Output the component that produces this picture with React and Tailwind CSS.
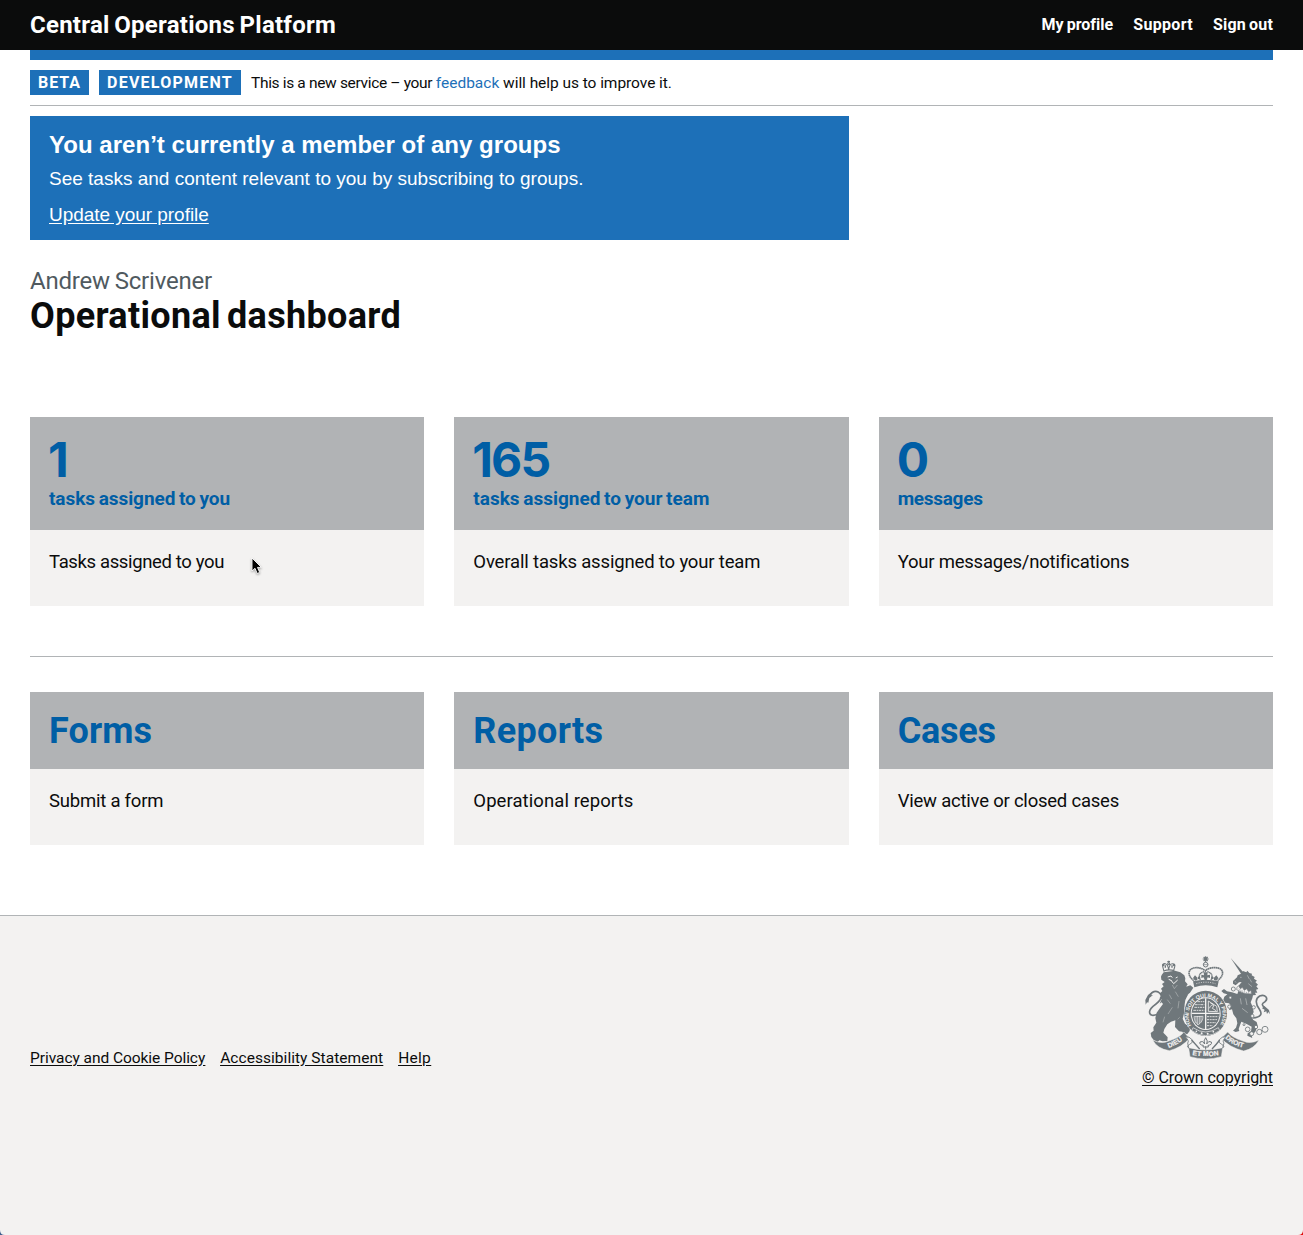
import React from "react";

const GREY = "#6f777b";
const PAPER = "#f3f2f1";

function RoyalArms() {
  return (
    <svg viewBox="30 30 375 312" className="block h-[104px] w-[125px] overflow-visible" aria-label="Royal coat of arms">
      <defs>
        <path id="garter" d="M169 241 A51 55 0 1 1 255 241" />
        <path id="dieu" d="M101 309 Q133 297 152 277" />
        <path id="mon" d="M172 330 Q212 337 254 330" />
        <path id="droit" d="M270 279 Q292 302 330 309" />
      </defs>

      {/* lion */}
      <g fill={GREY}>
        <path d="M80 90 L86 82 L120 77 L136 82 L148 91 L151 100 L150 109 L158 118 L154 124 L160 134 L155 142 L158 151 L151 165 L149 178 L147 205 L143 221 L150 236 L165 246 L164 258 L157 267 L146 266 L142 260 L132 259 L120 246 L121 226 L108 230 L97 238 L88 252 L85 263 L91 269 L98 277 L97 288 L83 289 L73 286 L68 291 L56 285 L49 276 L47 264 L56 257 L55 247 L64 233 L61 219 L65 203 L75 189 L84 177 L80 172 L74 176 L80 163 L73 160 L79 153 L75 145 L82 138 L78 131 L86 124 L81 117 L89 111 L79 104 L78 95 Z" />
        <path d="M145 128 L166 121 L175 128 L166 142 L149 158 Z" />
        <path d="M32 179 L31 165 L39 150 L53 139 L47 151 L54 150 L43 159 L40 173 L36 172 Z" />
      </g>
      <path d="M68 208 C38 219 39 197 54 184 C77 167 88 153 71 142 C60 136 50 142 43 154" fill="none" stroke={GREY} strokeWidth="5" />
      <path d="M98 96 L108 93 L112 98 M122 99 L128 96 M108 106 L116 116 L128 105 M101 103 L110 107" fill="none" stroke={PAPER} strokeWidth="3" />
      <path d="M112 120 L118 131 L127 120 M103 149 L110 162 M97 164 L106 176 M121 140 L130 155 M132 168 L129 190 M112 187 L99 207 M89 215 L84 232 M134 217 L128 223" fill="none" stroke={PAPER} strokeWidth="1" />
      <g stroke={GREY} strokeWidth="3.2" fill="none">
        <path d="M87 79 L83 64 Q82 55 91 56 Q99 58 101 75 Q103 56 112 56 Q122 56 119 66 L116 76" />
        <path d="M86 78 Q101 72 118 77 M101 53 L101 47 M97 50 L105 50 M91 68 L91 61 M111 68 L111 61" strokeWidth="4" />
        <circle cx="101" cy="56" r="3" /><circle cx="85" cy="60" r="2" /><circle cx="117" cy="60" r="2" />
      </g>

      {/* unicorn */}
      <g fill={GREY}>
        <path d="M287 39 L325 82 L319 88 Z" />
        <path d="M318 86 L324 78 L334 82 L337 77 L343 84 L351 86 L350 91 L359 96 L357 101 L366 107 L361 111 L369 119 L364 124 L370 132 L363 134 L367 143 L360 143 L363 150 L354 151 L352 160 L347 172 L353 186 L356 201 L351 212 L354 224 L365 231 L368 242 L361 260 L350 271 L352 279 L337 272 L338 265 L348 259 L350 245 L335 237 L319 230 L315 241 L311 252 L313 258 L302 261 L294 257 L303 248 L307 235 L304 220 L295 208 L291 193 L281 196 L289 183 L282 175 L270 173 L265 164 L268 155 L277 148 L266 145 L259 138 L267 132 L276 139 L291 142 L307 147 L312 133 L306 128 L320 111 L312 112 L302 121 L294 116 L294 108 L306 97 L308 91 Z" />
        <path d="M388 183 L402 195 L405 208 L400 201 L396 207 L394 199 L386 202 L389 194 L381 190 Z" />
      </g>
      <path d="M354 219 C379 216 382 206 374 194 C360 177 361 160 374 153 C391 146 401 161 390 170 C381 175 377 178 392 192" fill="none" stroke={GREY} strokeWidth="5" />
      <path d="M306 127 L311 122 L316 131 L322 127 L328 136 L335 131 L341 140 L348 136 L350 147 Q327 149 305 134 Z" fill={PAPER} stroke={GREY} strokeWidth="2" />
      <path d="M311 132 Q328 143 346 144" fill="none" stroke={GREY} strokeWidth="2" strokeDasharray="3 3" />
      <path d="M315 97 L320 97 M299 109 L304 112 M337 91 L343 102 M345 103 L350 112 M340 116 L351 125 M316 160 L319 178 M332 160 L336 180 M321 190 L338 203" stroke={PAPER} strokeWidth="1.2" />
      <g fill={PAPER} stroke={GREY} strokeWidth="2.5">
        <circle cx="295" cy="132" r="6" /><circle cx="286" cy="158" r="4" /><circle cx="283" cy="185" r="5" />
        <circle cx="356" cy="187" r="5" /><circle cx="352" cy="213" r="5" />
        <circle cx="338" cy="253" r="7" /><circle cx="350" cy="266" r="6" /><circle cx="363" cy="246" r="5" />
        <circle cx="373" cy="261" r="8" /><circle cx="390" cy="253" r="9" /><circle cx="327" cy="239" r="3" />
      </g>

      {/* garter and shield */}
      <ellipse cx="212" cy="205" rx="65" ry="69" fill={PAPER} />
      <ellipse cx="212" cy="205" rx="64" ry="68" fill={GREY} />
      <ellipse cx="212" cy="206" rx="45" ry="49" fill={PAPER} />
      <ellipse cx="212" cy="206" rx="42" ry="46" fill={GREY} />
      <text fill={PAPER} className="font-['Liberation_Sans'] text-[16px] font-bold">
        <textPath href="#garter" textLength="226" lengthAdjust="spacingAndGlyphs">HONI SOIT QUI MAL Y PENSE</textPath>
      </text>
      <path d="M212 160 V252 M170 205 H254" stroke={PAPER} strokeWidth="4" />
      <g stroke={PAPER} strokeWidth="2.5" fill="none">
        <path d="M180 179 H208 M178 187 H208 M175 196 H208 M187 170 H208" strokeDasharray="8 2 4 2" />
        <path d="M216 215 H250 M216 224 H248 M216 233 H243 M216 242 H233" strokeDasharray="7 2 5 2" />
        <path d="M220 168 L245 184 L247 200 L220 199 Z M223 190 Q229 176 237 181 L232 190 L243 197 M226 174 L235 178" />
        <path d="M177 215 Q177 230 189 240 Q204 230 204 214 Z M183 214 V234 M188 213 V238 M193 213 V237 M198 213 V232" strokeWidth="2" />
      </g>
      <path d="M174 248 Q212 274 250 248 L254 257 Q212 287 170 257 Z" fill={GREY} stroke={PAPER} strokeWidth="2" />
      <g fill={PAPER}><circle cx="200" cy="265" r="3" /><circle cx="218" cy="266" r="3" /><circle cx="235" cy="260" r="2.5" /><circle cx="184" cy="259" r="2.5" /></g>

      {/* crown */}
      <g fill="none" stroke={GREY}>
        <path d="M176 107 C164 97 159 86 164 77 C172 63 202 67 211 78 C220 66 253 63 261 77 C266 87 259 98 248 107" strokeWidth="5" strokeDasharray="5 1" />
        <path d="M207 80 C192 84 190 94 196 105 M217 80 C232 84 234 94 228 105" strokeWidth="4" strokeDasharray="4 1" />
        <path d="M212 34 V51 M203 42 H221 M206 36 L218 48 M218 36 L206 48" strokeWidth="3.5" />
        <circle cx="212" cy="59" r="7" strokeWidth="3" /><path d="M205 59 H219" strokeWidth="2" />
      </g>
      <g fill={GREY}>
        <path d="M174 109 Q212 99 251 109 L247 127 Q212 114 178 127 Z" />
        <path d="M209 105 L206 97 L199 99 V89 L207 91 L206 82 H218 L217 91 L225 89 V99 L218 97 L215 105 Z" />
        <path d="M180 107 L174 99 L180 91 L187 98 L187 105 Z M244 107 L250 99 L244 91 L237 98 L237 105 Z" />
        <circle cx="192" cy="99" r="4" /><circle cx="232" cy="99" r="4" />
      </g>
      <path d="M184 116 Q212 107 241 116" fill="none" stroke={PAPER} strokeWidth="2.5" strokeDasharray="3 4" />

      {/* motto ribbon */}
      <g fill={GREY} stroke={PAPER} strokeWidth="1.5">
        <path d="M53 285 Q79 298 99 289 Q134 278 147 261 L163 280 Q142 307 103 317 Q66 311 53 285 Z" />
        <path d="M372 285 Q346 298 326 289 Q291 278 278 261 L259 280 Q282 307 326 318 Q358 311 372 285 Z" />
        <path d="M161 308 Q212 322 263 308 L259 335 Q212 349 165 335 Z" />
      </g>
      <path d="M151 276 Q163 273 171 284 Q176 293 164 298 Q153 304 161 309 L158 294 Q164 288 151 276 M273 276 Q261 273 253 284 Q248 293 260 298 Q271 304 263 309 L267 294 Q260 288 273 276" fill={PAPER} stroke={GREY} strokeWidth="2.5" />
      <path d="M170 285 Q184 301 194 312 M254 285 Q242 301 231 312" fill="none" stroke={GREY} strokeWidth="4" />
      <path d="M212 278 Q220 288 215 297 Q221 285 229 291 Q232 300 219 301 L220 306 H204 L205 301 Q192 300 195 291 Q203 285 209 297 Q204 288 212 278 Z M212 304 V314" fill={PAPER} stroke={GREY} strokeWidth="3" />
      <g fill={PAPER} stroke={PAPER} strokeWidth="0.6" className="font-['Liberation_Sans'] text-[20px] font-bold">
        <text><textPath href="#dieu" textLength="48">DIEU</textPath></text>
        <text><textPath href="#mon" textLength="80">ET MON</textPath></text>
        <text><textPath href="#droit" textLength="62">DROIT</textPath></text>
      </g>
    </svg>
  );
}

function Pointer() {
  return (
    <svg viewBox="0 0 12 18" className="absolute left-[221px] top-[27px] h-[18px] w-[12px] drop-shadow-[0_1px_1px_rgba(0,0,0,0.35)]">
      <path d="M1 1 V14 L4 11.3 L6.2 16.5 L8.7 15.4 L6.5 10.4 H10.4 Z" fill="#000" stroke="#fff" strokeWidth="0.9" />
    </svg>
  );
}

function Card({ title, titleClass, caption, captionClass, text, textClass, pointer }) {
  return (
    <a className="block">
      <div className={`bg-[#b1b3b5] px-[19px] font-bold text-[#005ea5] ${caption ? "h-[113px] pt-[18px]" : "h-[77px] pt-[19px]"}`}>
        <span className={`block ${titleClass}`}>{title}</span>
        {caption && <span className={`mt-px block text-[19px] leading-[25px] ${captionClass}`}>{caption}</span>}
      </div>
      <div className="relative h-[76px] bg-[#f3f2f1] px-[19px] pt-5">
        <p className={`text-[18.5px] leading-[25px] text-[#0b0c0c] ${textClass}`}>{text}</p>
        {pointer && <Pointer />}
      </div>
    </a>
  );
}

const number = "-ml-px font-['Inter'] text-[48px] leading-[50px]";
const heading = "text-[36px] leading-[40px]";

const stats = [
  { title: "1", titleClass: number, caption: "tasks assigned to you", captionClass: "tracking-[-0.06px] [word-spacing:-1px]", text: "Tasks assigned to you", textClass: "tracking-[-0.36px]", pointer: true },
  { title: "165", titleClass: `${number} tracking-[-1.9px]`, caption: "tasks assigned to your team", captionClass: "tracking-[-0.01px] [word-spacing:-1px]", text: "Overall tasks assigned to your team", textClass: "tracking-[-0.16px]" },
  { title: "0", titleClass: number, caption: "messages", captionClass: "tracking-[-0.29px]", text: "Your messages/notifications", textClass: "tracking-[-0.22px]" },
];

const sections = [
  { title: "Forms", titleClass: `${heading} tracking-[0.09px]`, text: "Submit a form", textClass: "tracking-[-0.22px]" },
  { title: "Reports", titleClass: `${heading} tracking-[0.31px]`, text: "Operational reports", textClass: "tracking-[0.08px]" },
  { title: "Cases", titleClass: `${heading} tracking-[-0.25px]`, text: "View active or closed cases", textClass: "tracking-[-0.22px]" },
];

export default function App() {
  return (
    <div className="flex h-[1235px] flex-col overflow-hidden bg-white font-['Roboto',sans-serif] text-[#0b0c0c]">
      <header className="flex h-[50px] shrink-0 items-center justify-between bg-[#0b0c0c] px-[30px] font-bold text-white">
        <a className="text-2xl leading-[50px] tracking-[0.25px] [word-spacing:-1.5px]">Central Operations Platform</a>
        <nav className="flex gap-5 text-base leading-[50px]">
          <a className="tracking-[0.01px] [word-spacing:-1px]">My profile</a>
          <a className="tracking-[0.33px]">Support</a>
          <a className="tracking-[0.17px] [word-spacing:-1px]">Sign out</a>
        </nav>
      </header>

      <main className="mx-[30px] border-t-10 border-[#1d70b8]">
        <div className="flex h-[46px] items-center border-b border-[#b1b4b6] text-base">
          <strong className="h-[25px] w-[59px] bg-[#1d70b8] px-2 leading-[25px] tracking-[0.95px] text-white">BETA</strong>
          <strong className="ml-2.5 h-[25px] w-[142px] bg-[#1d70b8] px-2 leading-[25px] tracking-[1.24px] text-white">DEVELOPMENT</strong>
          <p className="ml-2.5 pt-0.5 text-[15.5px] leading-[25px] whitespace-pre">
            <span className="tracking-[-0.33px]">This is a new service – your </span>
            <a className="text-[#1d70b8]">feedback</a>
            <span className="tracking-[-0.05px]"> will help us to improve it.</span>
          </p>
        </div>

        <section className="mt-2.5 h-[124px] w-[819px] bg-[#1d70b8] px-[19px] pt-[14px] font-['Liberation_Sans',sans-serif] text-white">
          <h2 className="text-2xl leading-[30px] font-bold tracking-[0.03px]">You aren’t currently a member of any groups</h2>
          <p className="mt-1.5 text-[19px] leading-[25px]">See tasks and content relevant to you by subscribing to groups.</p>
          <a className="mt-[11px] block text-[19px] leading-[25px] tracking-[-0.04px] underline underline-offset-2">Update your profile</a>
        </section>

        <span className="mt-[26px] block text-2xl leading-[30px] tracking-[-0.2px] text-[#505a5f] [word-spacing:-1px]">Andrew Scrivener</span>
        <h1 className="text-[36px] leading-[40px] font-bold tracking-[0.31px] [word-spacing:-3px]">Operational dashboard</h1>

        <div className="mt-[81px] grid grid-cols-3 gap-[30px]">
          {stats.map((s) => <Card key={s.caption} {...s} />)}
        </div>
        <hr className="mt-[50px] border-[#b1b4b6]" />
        <div className="mt-[35px] grid grid-cols-3 gap-[30px]">
          {sections.map((s) => <Card key={s.title} {...s} />)}
        </div>
      </main>

      <footer className="relative mt-[70px] flex grow items-start justify-between border-t border-[#b1b4b6] bg-[#f3f2f1] px-[30px] pt-[39px] text-base leading-5">
        <nav className="mt-[93px] flex gap-[15px] underline underline-offset-2">
          <a className="text-[15.5px] tracking-[-0.05px]">Privacy and Cookie Policy</a>
          <a className="text-[15.5px] tracking-[0.04px]">Accessibility Statement</a>
          <a className="text-[15.5px] tracking-[0.3px]">Help</a>
        </nav>
        <div className="flex flex-col items-center">
          <RoyalArms />
          <a className="mt-[9px] tracking-[-0.09px] underline underline-offset-2">© Crown copyright</a>
        </div>
        <svg viewBox="0 0 5 5" className="absolute bottom-0 left-0 size-[5px]"><path d="M0 0 Q0 5 5 5 H0 Z" fill="#3f5f8f" /></svg>
        <svg viewBox="0 0 5 5" className="absolute right-0 bottom-0 size-[5px]"><path d="M5 0 Q5 5 0 5 H5 Z" fill="#e01010" /></svg>
      </footer>
    </div>
  );
}
